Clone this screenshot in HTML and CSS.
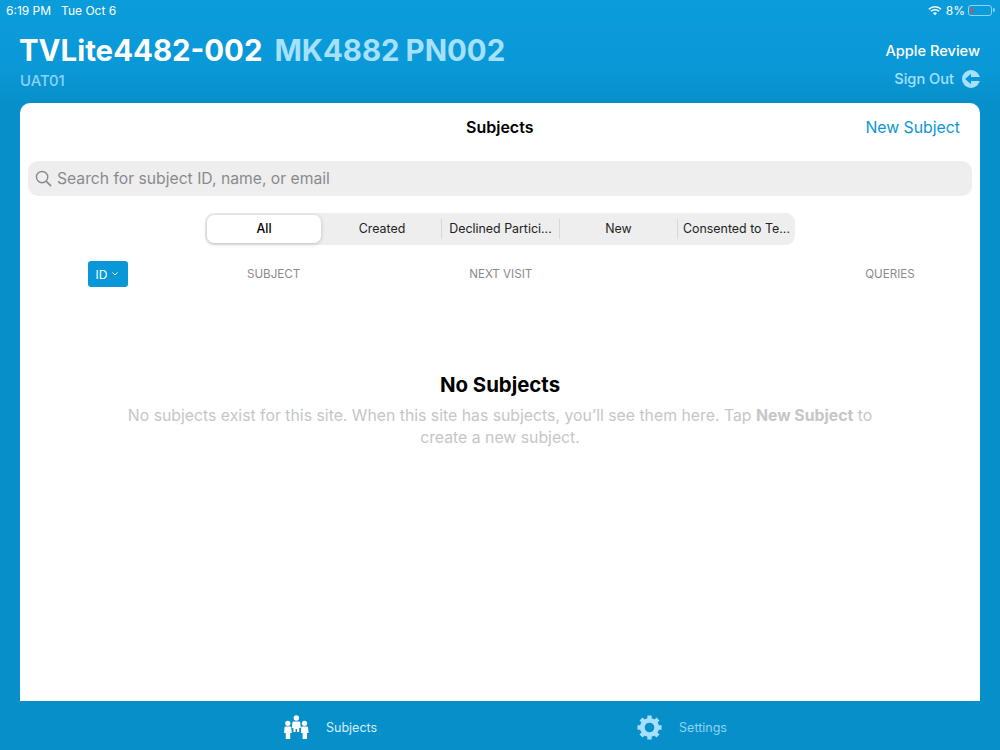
FILE: index.html
```html
<!DOCTYPE html>
<html lang="en">
<head>
  <meta charset="UTF-8">
  <title>Subjects</title>
  <link rel="stylesheet" href="styles.css">
</head>
<body>
<div class="app">
  <div class="status">
    <div class="status-left"><span>6:19 PM</span><span>Tue Oct 6</span></div>
    <div class="status-right">
      <svg class="wifi" width="14" height="11" viewBox="0 0 16 12">
        <path d="M8 11.500 5.800 9a3.200 3.200 0 0 1 4.400 0z" fill="#fff"/>
        <path d="M1 4.600a10 10 0 0 1 14 0M3.300 6.900a6.800 6.800 0 0 1 9.400 0" fill="none" stroke="#fff" stroke-width="1.700"/>
      </svg>
      <span>8%</span>
      <div class="battery"><div class="battery-level"></div></div>
      <div class="battery-tip"></div>
    </div>
  </div>

  <div class="header">
    <div>
      <div class="title">TVLite4482-002<span class="title-sub">MK4882</span><span class="title-sub">PN002</span></div>
      <div class="site">UAT01</div>
    </div>
    <div class="account">
      <div class="account-name">Apple Review</div>
      <div class="sign-out">
        <span>Sign Out</span>
        <svg width="18" height="18" viewBox="0 0 18 18">
          <circle cx="9" cy="9" r="9" fill="#a5e0fc"/>
          <path d="M3 9 9 3.800V7h9v4H9v3.200z" fill="#0a97d7"/>
        </svg>
      </div>
    </div>
  </div>

  <div class="card">
    <div class="card-top">
      <div class="card-title">Subjects</div>
      <div class="new-subject">New Subject</div>
    </div>
    <div class="search">
      <svg width="17" height="17" viewBox="0 0 18 18">
        <circle cx="7.500" cy="7.500" r="6" fill="none" stroke="#8a8a8e" stroke-width="1.500"/>
        <path d="M12 12l5 5" stroke="#8a8a8e" stroke-width="1.800"/>
      </svg>
      <span>Search for subject ID, name, or email</span>
    </div>
    <div class="segments">
      <div class="segment active">All</div>
      <div class="segment">Created</div>
      <div class="segment divided">Declined Partici...</div>
      <div class="segment divided">New</div>
      <div class="segment divided">Consented to Te...</div>
    </div>
    <div class="columns">
      <div class="sort">ID
        <svg width="6" height="4" viewBox="0 0 6 4"><path d="M.5.5 3 3 5.500.5" fill="none" stroke="#fff"/></svg>
      </div>
      <div class="col col-subject">SUBJECT</div>
      <div class="col col-visit">NEXT VISIT</div>
      <div class="col col-queries">QUERIES</div>
    </div>
    <div class="empty">
      <h2>No Subjects</h2>
      <p>No subjects exist for this site. When this site has subjects, you’ll see them here. Tap <b>New Subject</b> to create a new subject.</p>
    </div>
  </div>

  <div class="tabs">
    <div class="tab tab-subjects">
      <svg width="25" height="25" viewBox="0 0 25 25" fill="#fff">
        <circle cx="12.300" cy="3" r="2.700"/>
        <path d="M9.500 6.500h5.600q1 0 1.100 1l.6 5.500h-1.600v4h-2.200v-3h-1.400v3H9.400v-4H7.800l.6-5.500q.1-1 1.100-1z"/>
        <circle cx="3.800" cy="8.300" r="2.600"/>
        <path d="M1.500 11.500h4.600q1 0 1.100 1l.6 5.500H6.200v6H1.800v-6H.1l.4-5.500q.1-1 1-1z"/>
        <circle cx="20.500" cy="8.300" r="2.600"/>
        <path d="M18.200 11.500h4.700q1 0 1.100 1l.6 5.500H23v6h-4.400v-6H17l.2-5.500q.1-1 1-1z"/>
      </svg>
      <span>Subjects</span>
    </div>
    <div class="tab tab-settings">
      <svg width="25" height="25" viewBox="0 0 26 26">
        <circle cx="13" cy="13" r="7.500" fill="none" stroke="#a5e0fc" stroke-width="5"/>
        <path d="M13 0.500v25M0.500 13h25M4.200 4.200l17.600 17.600M21.800 4.200 4.200 21.800" stroke="#a5e0fc" stroke-width="4.500" stroke-dasharray="5 15.500"/>
      </svg>
      <span>Settings</span>
    </div>
  </div>
</div>
</body>
</html>
```

FILE: styles.css
```css
* {
  padding: 0;
  margin: 0;
  box-sizing: border-box;
}

body {
  width: 1000px;
  height: 750px;
  overflow: hidden;
  font-family: Inter, "Liberation Sans", sans-serif;
}

.app {
  display: flex;
  flex-direction: column;
  height: 750px;
  background: linear-gradient(#0b9cdc 0, #0a98d7 70px, #078fc9 103px, #078fc9 100%);
}

.status {
  display: flex;
  justify-content: space-between;
  align-items: center;
  height: 20px;
  padding: 0 5px 0 6px;
  font-size: 12px;
  color: #fff;
}

.status-left {
  display: flex;
  gap: 10px;
}

.status-right {
  display: flex;
  align-items: center;
}

.wifi {
  margin-right: 4px;
}

.battery {
  width: 24px;
  height: 11px;
  margin-left: 3px;
  padding: 2px;
  border: 1px solid #8fd3f4;
  border-radius: 3px;
}

.battery-level {
  width: 2px;
  height: 100%;
  background-color: #e0483e;
}

.battery-tip {
  width: 2px;
  height: 4px;
  margin-left: 1px;
  border-radius: 0 2px 2px 0;
  background-color: #8fd3f4;
}

.header {
  display: flex;
  justify-content: space-between;
  height: 83px;
  padding: 12px 20px 0;
}

.title {
  margin-left: -1px;
  font-size: 29.400px;
  font-weight: 700;
  line-height: 37px;
  color: #fff;
}

.title-sub {
  margin-left: 12px;
  color: #a5e0fc;
}

.title-sub + .title-sub {
  margin-left: 6px;
}

.site {
  margin-top: 2px;
  font-size: 14.800px;
  font-weight: 500;
  line-height: 20px;
  color: #8fd3f4;
}

.account {
  text-align: right;
}

.account-name {
  margin-top: 7px;
  font-size: 14.600px;
  font-weight: 500;
  line-height: 24px;
  color: #fff;
}

.sign-out {
  display: flex;
  justify-content: flex-end;
  align-items: center;
  gap: 8px;
  height: 24px;
  margin-top: 4px;
  font-size: 14.600px;
  font-weight: 500;
  color: #a5e0fc;
}

.card {
  flex: 1;
  margin: 0 20px;
  padding: 0 8px;
  border-radius: 10px 10px 0 0;
  background-color: #fff;
}

.card-top {
  display: flex;
  justify-content: space-between;
  height: 58px;
  padding: 10px 12px 0 438px;
  line-height: 29px;
}

.card-title {
  font-size: 16px;
  font-weight: 600;
  color: #000;
}

.new-subject {
  font-size: 15.800px;
  color: #0a97d7;
}

.search {
  display: flex;
  align-items: center;
  gap: 5px;
  height: 35px;
  padding-left: 7px;
  border-radius: 10px;
  font-size: 15.700px;
  color: #8a8a8e;
  background-color: #eeeeef;
}

.segments {
  display: flex;
  width: 590px;
  height: 32px;
  margin: 17px auto 0;
  border-radius: 9px;
  background-color: #eeeeef;
}

.segment {
  flex: 0 0 118px;
  display: flex;
  justify-content: center;
  align-items: center;
  padding-bottom: 1px;
  font-size: 12.400px;
  color: #222;
  white-space: nowrap;
}

.segment.divided {
  border-left: 1px solid #d8d8da;
  margin: 6px 0;
}

.segment.active {
  flex-basis: 114px;
  margin: 2px;
  border-radius: 7px;
  font-weight: 500;
  color: #000;
  background-color: #fff;
  box-shadow: 0 1px 4px rgba(0, 0, 0, .2);
}

.columns {
  display: flex;
  align-items: center;
  height: 26px;
  margin-top: 16px;
  padding-left: 60px;
  font-size: 11.600px;
  color: #8a8a8e;
}

.sort {
  display: flex;
  justify-content: center;
  align-items: center;
  gap: 5px;
  width: 40px;
  height: 26px;
  padding-right: 2px;
  border-radius: 3px;
  font-size: 12px;
  color: #fff;
  background-color: #0a97d7;
}

.col-subject {
  margin-left: 119px;
}

.col-visit {
  margin-left: 169px;
}

.col-queries {
  margin-left: 333px;
}

.empty {
  width: 760px;
  margin: 85px auto 0;
  text-align: center;
}

.empty h2 {
  font-size: 20.400px;
  font-weight: 700;
  line-height: 26px;
  color: #000;
}

.empty p {
  margin-top: 7px;
  font-size: 15.800px;
  line-height: 22px;
  color: #c6c6c8;
}

.tabs {
  display: flex;
  height: 49px;
  padding-top: 3px;
  font-size: 12.500px;
}

.tab {
  display: flex;
  align-items: center;
  gap: 17px;
  height: 100%;
}

.tab-subjects {
  margin-left: 284px;
  color: #d5f0fd;
}

.tab-settings {
  margin-left: 260px;
  color: #8fd3f4;
}
```
